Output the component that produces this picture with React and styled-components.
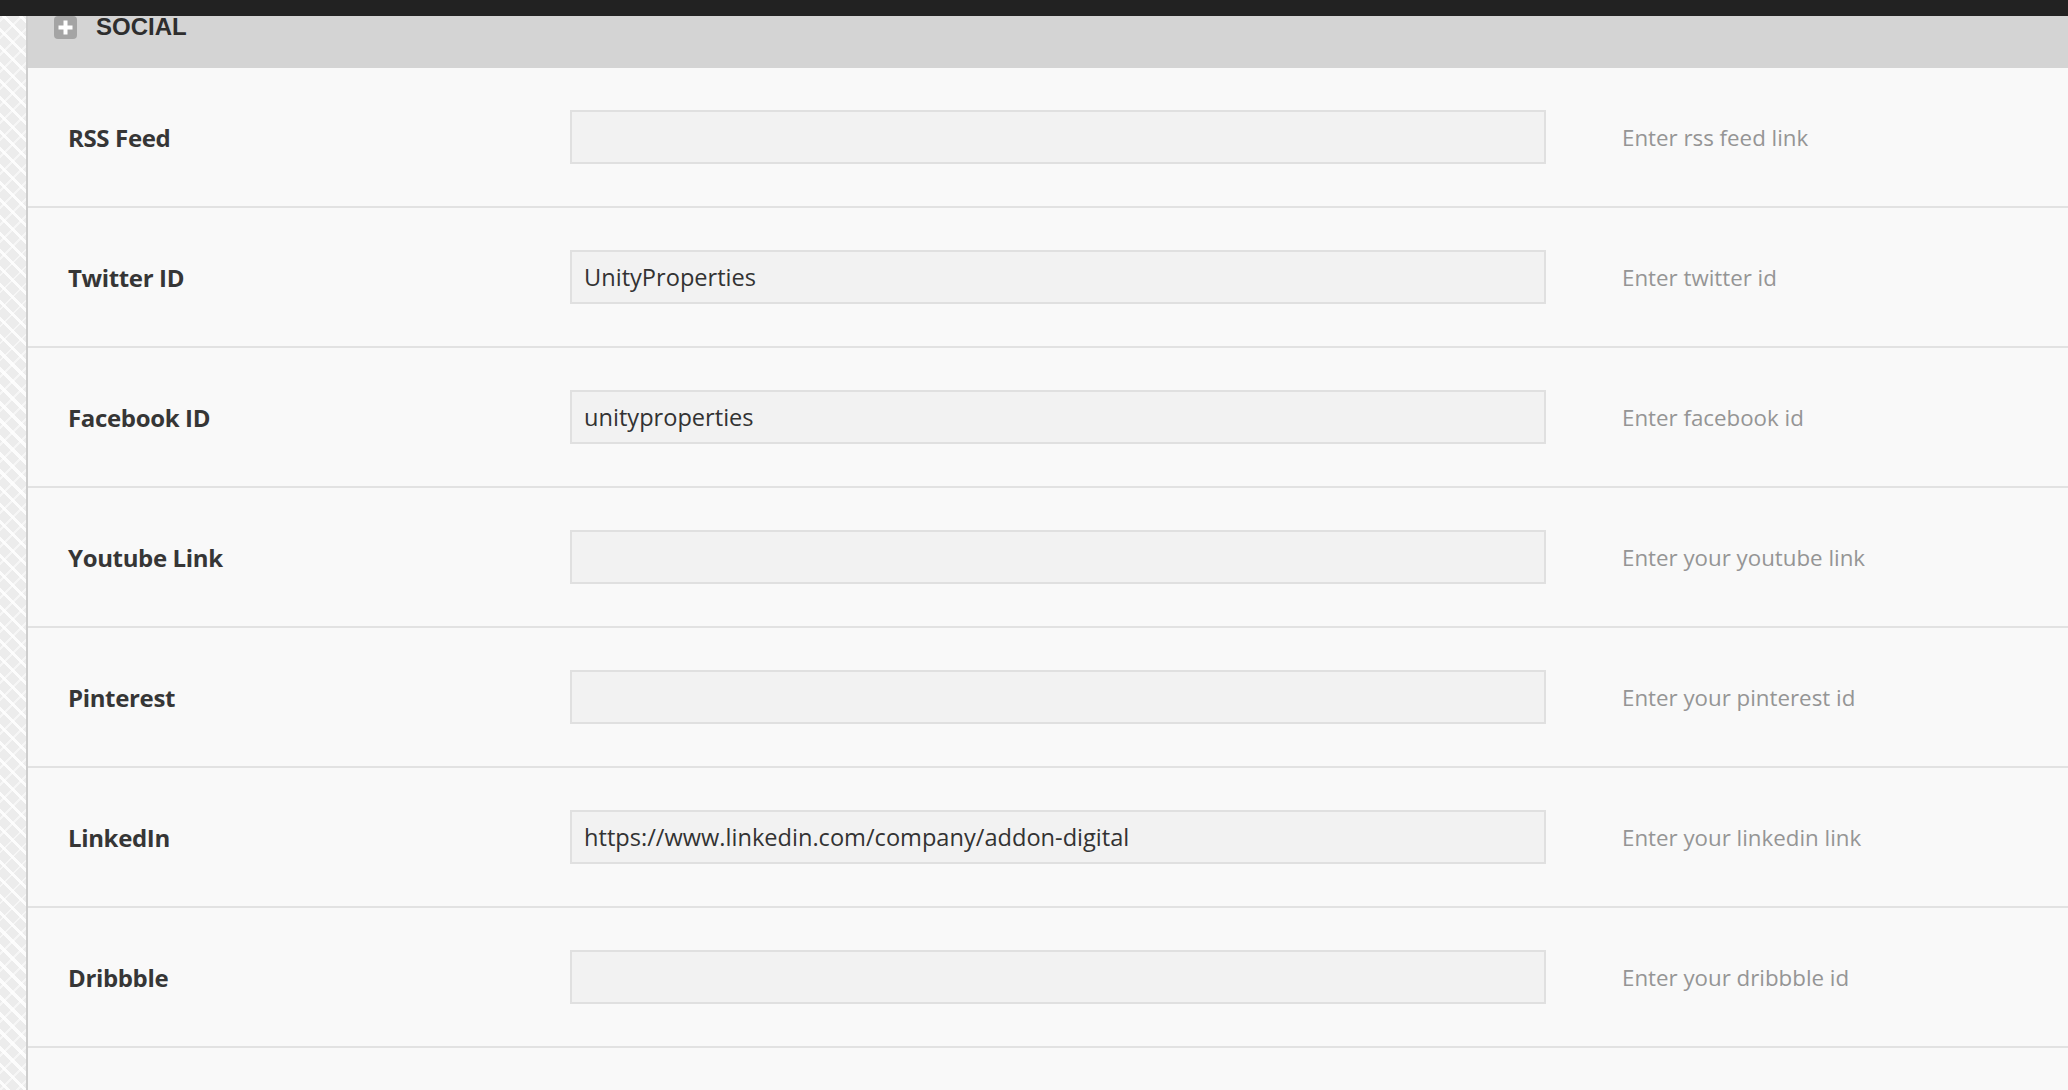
import React from "react";
import styled, { createGlobalStyle } from "styled-components";

const GlobalStyle = createGlobalStyle`
  html, body {
    margin: 0;
    padding: 0;
    background: #f9f9f9;
    overflow: hidden;
  }
  * {
    box-sizing: border-box;
  }
`;

const fields = [
  { label: "RSS Feed", value: "", hint: "Enter rss feed link" },
  { label: "Twitter ID", value: "UnityProperties", hint: "Enter twitter id" },
  { label: "Facebook ID", value: "unityproperties", hint: "Enter facebook id" },
  { label: "Youtube Link", value: "", hint: "Enter your youtube link" },
  { label: "Pinterest", value: "", hint: "Enter your pinterest id" },
  {
    label: "LinkedIn",
    value: "https://www.linkedin.com/company/addon-digital",
    hint: "Enter your linkedin link",
  },
  { label: "Dribbble", value: "", hint: "Enter your dribbble id" },
];

const PlusIcon = () => (
  <IconBox width="23" height="23" viewBox="0 0 23 23">
    <rect x="0" y="0" width="23" height="23" rx="4" fill="#a4a4a4" />
    <path d="M11.5 4.5v14M4.5 11.5h14" stroke="#ffffff" strokeWidth="4" />
  </IconBox>
);

export default function App() {
  return (
    <>
      <GlobalStyle />
      <TopBar />
      <Layout>
        <Strip />
        <Main>
          <SectionHeader>
            <PlusIcon />
            <SectionTitle>SOCIAL</SectionTitle>
          </SectionHeader>
          {fields.map((f) => (
            <Row key={f.label}>
              <Label>{f.label}</Label>
              <Input type="text" defaultValue={f.value} readOnly />
              <Hint>{f.hint}</Hint>
            </Row>
          ))}
          <Row $empty />
        </Main>
      </Layout>
    </>
  );
}

const TopBar = styled.div`
  height: 16px;
  background: #222222;
`;

const Layout = styled.div`
  display: flex;
  min-height: 1074px;
`;

const Strip = styled.div`
  width: 28px;
  flex-shrink: 0;
  border-right: 2px solid #cdcdcd;
  background-color: #ececec;
  background-image: repeating-linear-gradient(
      45deg,
      transparent 0 5px,
      rgba(255, 255, 255, 0.85) 5px 8px,
      transparent 8px 12px
    ),
    repeating-linear-gradient(
      -45deg,
      transparent 0 6px,
      rgba(255, 255, 255, 0.55) 6px 8px,
      transparent 8px 12px
    );
`;

const Main = styled.div`
  flex: 1;
  background: #f9f9f9;
`;

const SectionHeader = styled.div`
  height: 52px;
  background: #d4d4d4;
  display: flex;
  align-items: flex-start;
  gap: 19px;
  padding-left: 26px;
`;

const IconBox = styled.svg`
  display: block;
  flex-shrink: 0;
`;

const SectionTitle = styled.span`
  font-family: "Liberation Sans", Arial, sans-serif;
  font-weight: 700;
  font-size: 24px;
  line-height: 20px;
  padding-top: 1px;
  color: #2e2e2e;
`;

const Row = styled.div`
  display: grid;
  grid-template-columns: 542px 976px 1fr;
  align-items: center;
  height: ${(p) => (p.$empty ? "60px" : "140px")};
  border-bottom: ${(p) => (p.$empty ? "none" : "2px solid #e2e2e2")};
`;

const Label = styled.div`
  padding-left: 40px;
  font-family: "Open Sans", sans-serif;
  font-weight: 700;
  font-size: 24px;
  letter-spacing: -0.35px;
  color: #363636;
`;

const Input = styled.input`
  height: 54px;
  width: 100%;
  border: 2px solid #e0e0e0;
  background: #f2f2f2;
  padding: 0 12px;
  font-family: "Open Sans", sans-serif;
  font-size: 23.6px;
  color: #333333;
  outline: none;
`;

const Hint = styled.div`
  padding-left: 76px;
  font-family: "Open Sans", sans-serif;
  font-size: 22.3px;
  color: #959595;
  white-space: nowrap;
`;
